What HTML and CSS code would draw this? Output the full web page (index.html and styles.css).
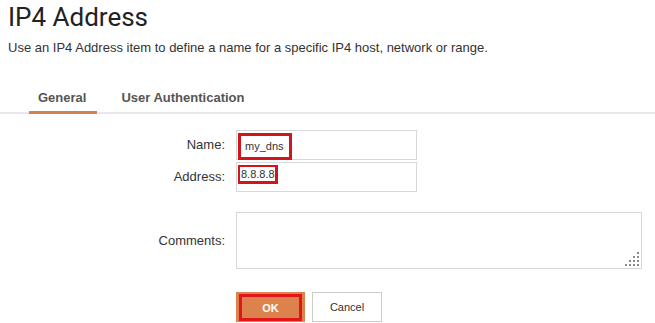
FILE: index.html
```html
<!DOCTYPE html>
<html lang="en">
<head>
    <meta charset="UTF-8">
    <title>IP4 Address</title>
    <link rel="stylesheet" href="styles.css">
</head>
<body>
    <div class="page">
        <h1>IP4 Address</h1>
        <p class="intro">Use an IP4 Address item to define a name for a specific IP4 host, network or range.</p>

        <div class="tabs">
            <div class="tab active">General</div>
            <div class="tab">User Authentication</div>
        </div>

        <div class="form">
            <label class="label">Name:</label>
            <div class="field"><span class="mark mark-name">my_dns</span></div>

            <label class="label">Address:</label>
            <div class="field"><span class="mark mark-addr">8.8.8.8</span></div>

            <label class="label label-comments">Comments:</label>
            <div class="textarea">
                <svg class="grip" width="14" height="14" viewBox="0 0 14 14">
                    <rect x="12" y="0" width="2" height="2"/>
                    <rect x="12" y="4" width="2" height="2"/>
                    <rect x="8" y="4" width="2" height="2"/>
                    <rect x="12" y="8" width="2" height="2"/>
                    <rect x="8" y="8" width="2" height="2"/>
                    <rect x="4" y="8" width="2" height="2"/>
                    <rect x="12" y="12" width="2" height="2"/>
                    <rect x="8" y="12" width="2" height="2"/>
                    <rect x="4" y="12" width="2" height="2"/>
                    <rect x="0" y="12" width="2" height="2"/>
                </svg>
            </div>

            <div class="buttons">
                <button class="btn btn-ok"><span>OK</span></button>
                <button class="btn btn-cancel">Cancel</button>
            </div>
        </div>
    </div>
</body>
</html>
```

FILE: styles.css
```css
body {
    margin: 0;
    font-family: "Liberation Sans", Arial, sans-serif;
    color: #333;
    background: #fff;
}
.page {
    padding: 0 0 0 8px;
}
h1 {
    font-family: Roboto, "Liberation Sans", sans-serif;
    font-weight: 400;
    font-size: 26px;
    line-height: 34px;
    margin: 0;
    color: #222;
}
.intro {
    font-size: 13px;
    margin: 6px 0 0 0;
    line-height: 15px;
    color: #333;
}
.tabs {
    display: flex;
    margin: 28px 0 0 -8px;
    padding-left: 29px;
    border-bottom: 2px solid #e8e8ec;
}
.tab {
    font-size: 13px;
    line-height: 15px;
    font-weight: bold;
    color: #555;
    padding: 7px 11px 6px 9px;
    margin-right: 15px;
    border-bottom: 3px solid transparent;
    margin-bottom: -2px;
}
.tab.active {
    border-bottom-color: #d4804f;
}
.form {
    display: grid;
    grid-template-columns: 217px 406px;
    column-gap: 11px;
    row-gap: 2px;
    margin-top: 16px;
}
.label {
    text-align: right;
    font-size: 13px;
    color: #333;
    line-height: 30px;
}
.field {
    width: 181px;
    height: 30px;
    box-sizing: border-box;
    border: 1px solid #d8d8d8;
    display: flex;
    align-items: center;
    padding-left: 1px;
}
.mark {
    border: 3px solid #d2141c;
    font-size: 11px;
    color: #333;
    box-sizing: border-box;
}
.mark-name {
    width: 54px;
    height: 27px;
    padding: 4px 0 0 4px;
    margin-top: 3px;
}
.mark-addr {
    width: 40px;
    height: 19px;
    border-width: 2px 3px 3px 2px;
    padding: 1px 0 0 1px;
    margin-top: -6px;
    line-height: 13px;
}
.label-comments {
    margin-top: 18px;
    line-height: 57px;
}
.textarea {
    margin-top: 18px;
    height: 57px;
    box-sizing: border-box;
    border: 1px solid #d8d8d8;
    position: relative;
}
.grip {
    position: absolute;
    right: 2px;
    bottom: 2px;
    fill: #8a8a8a;
}
.buttons {
    grid-column: 2;
    margin-top: 21px;
    display: flex;
    gap: 7px;
}
.btn {
    font-family: "Liberation Sans", Arial, sans-serif;
    font-size: 11px;
    height: 30px;
    width: 69px;
    box-sizing: border-box;
    padding: 0;
    cursor: pointer;
}
.btn-ok {
    background: #dd814d;
    border: none;
    padding: 2px 3px 1px 3px;
    color: #fff;
    font-weight: bold;
}
.btn-ok span {
    display: flex;
    align-items: center;
    justify-content: center;
    height: 100%;
    border: 3px solid #e0161a;
    box-sizing: border-box;
}
.btn-cancel {
    background: #fff;
    border: 1px solid #ccc;
    color: #333;
    width: 70px;
}
```
